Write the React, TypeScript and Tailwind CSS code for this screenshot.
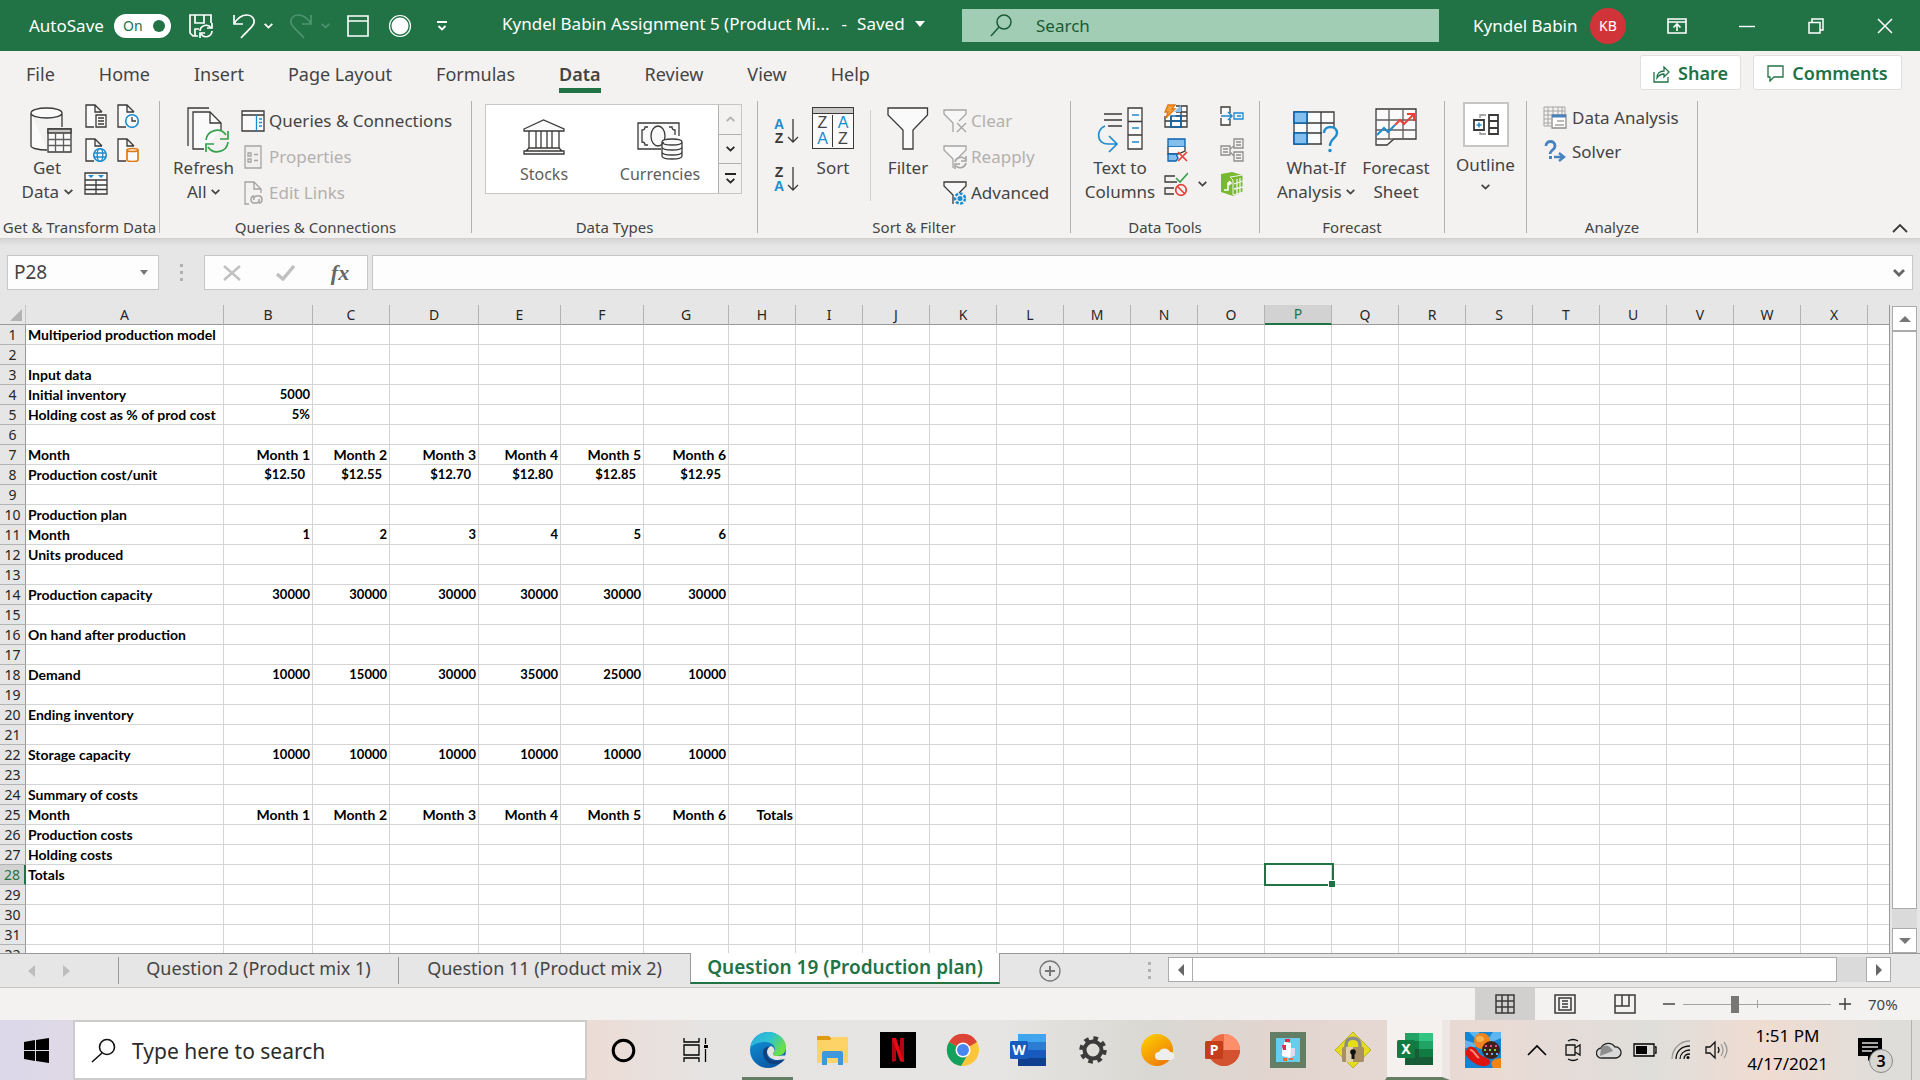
import React from "react";

type IconProps = {
  w?: number;
  h?: number;
  className?: string;
  children: React.ReactNode;
};

const Icon = ({ w = 24, h = 24, className = "", children }: IconProps) => (
  <svg
    width={w}
    height={h}
    viewBox={`0 0 ${w} ${h}`}
    fill="none"
    stroke="#3b3a39"
    strokeWidth="1.3"
    className={`shrink-0 ${className}`}
    aria-hidden="true"
  >
    {children}
  </svg>
);

const Caret = ({ className = "" }: { className?: string }) => (
  <svg
    width="9"
    height="6"
    viewBox="0 0 9 6"
    fill="none"
    stroke="currentColor"
    strokeWidth="1.8"
    className={`inline-block shrink-0 ${className}`}
    aria-hidden="true"
  >
    <path d="M0.7 0.8 4.5 4.6 8.3 0.8" />
  </svg>
);

const columns = [
  { name: "A", width: 198 },
  { name: "B", width: 89 },
  { name: "C", width: 77 },
  { name: "D", width: 89 },
  { name: "E", width: 82 },
  { name: "F", width: 83 },
  { name: "G", width: 85 },
  ..."HIJKLMNOPQRSTUVWX".split("").map((name) => ({ name, width: 67 })),
];

const months = ["Month 1", "Month 2", "Month 3", "Month 4", "Month 5", "Month 6"];

const cells: Record<number, string[]> = {
  1: ["Multiperiod production model"],
  3: ["Input data"],
  4: ["Initial inventory", "5000"],
  5: ["Holding cost as % of prod cost", "5%"],
  7: ["Month", ...months],
  8: ["Production cost/unit", "$12.50", "$12.55", "$12.70", "$12.80", "$12.85", "$12.95"],
  10: ["Production plan"],
  11: ["Month", "1", "2", "3", "4", "5", "6"],
  12: ["Units produced"],
  14: ["Production capacity", "30000", "30000", "30000", "30000", "30000", "30000"],
  16: ["On hand after production"],
  18: ["Demand", "10000", "15000", "30000", "35000", "25000", "10000"],
  20: ["Ending inventory"],
  22: ["Storage capacity", "10000", "10000", "10000", "10000", "10000", "10000"],
  24: ["Summary of costs"],
  25: ["Month", ...months, "Totals"],
  26: ["Production costs"],
  27: ["Holding costs"],
  28: ["Totals"],
};

const tabs = [
  "File",
  "Home",
  "Insert",
  "Page Layout",
  "Formulas",
  "Data",
  "Review",
  "View",
  "Help",
];

function TitleBar() {
  return (
    <header className="flex h-[51px] shrink-0 items-center bg-[#217346] text-[17px] text-white">
      <div className="flex h-full w-[502px] shrink-0 items-center pl-[29px]">
        <label htmlFor="autosave" className="w-[85px] whitespace-nowrap">
          AutoSave
        </label>
        <button
          id="autosave"
          role="switch"
          aria-checked="true"
          className="flex h-6 w-[57px] items-center justify-between rounded-full bg-white pr-[6px] pl-[9px] text-[14px] text-[#217346]"
        >
          On
          <span className="h-3 w-3 rounded-full bg-[#217346]" />
        </button>
        <button aria-label="Save" className="ml-[17px]">
          <Icon w={26} h={26}>
            <g stroke="#fff" strokeWidth="1.7">
              <path d="M10 23H5L2 20V2h21v8M7 2v8h9V2M7 23v-7h4" />
              <path d="M12 18a6 6 0 0 1 11-3M24 10v5h-5M24 18a6 6 0 0 1-11 3M12 25v-5h5" />
            </g>
          </Icon>
        </button>
        <button aria-label="Undo" className="ml-[18px] flex items-center gap-2">
          <Icon w={24} h={26}>
            <path
              d="M2 2v9h9M2 11C6 4 11 2 15 2c5 0 8 4 7 8-1 4-8 9-13 15"
              stroke="#fff"
              strokeWidth="1.7"
            />
          </Icon>
          <Caret />
        </button>
        <button
          aria-label="Redo"
          disabled
          className="ml-4 flex items-center gap-2 text-[#4c9470]"
        >
          <Icon w={24} h={26}>
            <path
              d="M22 2v9h-9M22 11C18 4 13 2 9 2 4 2 1 6 2 10c1 4 8 9 13 15"
              stroke="#4c9470"
              strokeWidth="1.7"
            />
          </Icon>
          <Caret />
        </button>
        <button aria-label="Form" className="ml-4">
          <Icon w={24} h={24}>
            <path d="M2 2h20v20H2zM2 7h20" stroke="#fff" strokeWidth="1.6" />
          </Icon>
        </button>
        <button aria-label="Record" className="ml-[18px]">
          <Icon w={24} h={24}>
            <circle cx="12" cy="12" r="10.5" stroke="#fff" strokeWidth="1.2" />
            <circle cx="12" cy="12" r="8.5" fill="#fff" stroke="none" />
          </Icon>
        </button>
        <button aria-label="Customize Quick Access Toolbar" className="ml-6">
          <Icon w={12} h={12}>
            <path d="M1 2h10M2.500 6 6 9.500 9.500 6" stroke="#fff" strokeWidth="1.8" />
          </Icon>
        </button>
      </div>
      <div className="flex w-[460px] shrink-0 items-center pb-[3px] whitespace-pre">
        <span>Kyndel Babin Assignment 5 (Product Mi...</span>
        <span className="ml-3">-</span>
        <button className="ml-[10px] flex items-center gap-[10px]">
          Saved
          <Icon w={10} h={6}>
            <path d="M0 0h10L5 6z" fill="#fff" stroke="none" />
          </Icon>
        </button>
      </div>
      <label className="flex h-[33px] min-w-0 flex-1 items-center bg-[#a0cdb4] pl-7">
        <Icon w={22} h={24}>
          <g stroke="#185c37" strokeWidth="1.5">
            <circle cx="14" cy="8" r="7" />
            <path d="M9 13 1 22" />
          </g>
        </Icon>
        <input
          type="search"
          aria-label="Search"
          placeholder="Search"
          className="ml-6 min-w-0 flex-1 bg-transparent text-[17px] outline-none placeholder:text-[#185c37]"
        />
      </label>
      <div className="flex w-[481px] shrink-0 items-center pl-[34px]">
        <button className="flex w-[153px] items-center justify-between whitespace-nowrap">
          Kyndel Babin
          <span className="flex h-9 w-9 items-center justify-center rounded-full bg-[#d13438] text-[14px]">
            KB
          </span>
        </button>
        <button aria-label="Ribbon Display Options" className="ml-[41px]">
          <Icon w={20} h={16}>
            <path
              d="M1 1h18v14H1zM1 4h18M10 13V6M6.500 9.500 10 6l3.500 3.500"
              stroke="#fff"
              strokeWidth="1.6"
            />
          </Icon>
        </button>
        <button aria-label="Minimize" className="ml-[52px]">
          <Icon w={16} h={16}>
            <path d="M0 8.500h16" stroke="#fff" strokeWidth="1.400" />
          </Icon>
        </button>
        <button aria-label="Restore" className="ml-[53px]">
          <Icon w={16} h={16}>
            <path d="M1 4.500h11V15H1zM4 4V1h11v11h-3" stroke="#fff" strokeWidth="1.500" />
          </Icon>
        </button>
        <button aria-label="Close" className="ml-[53px]">
          <Icon w={16} h={16}>
            <path d="M1 1l14 14M15 1 1 15" stroke="#fff" strokeWidth="1.500" />
          </Icon>
        </button>
      </div>
    </header>
  );
}

function TabRow() {
  return (
    <div className="flex h-12 shrink-0 items-start pl-[26px]">
      <nav className="flex gap-11 text-[18px] leading-7 text-[#444]">
        {tabs.map((tab) => (
          <button
            key={tab}
            className={
              tab === "Data"
                ? "h-[42px] border-b-[5px] border-[#217346] pt-[9px] font-semibold whitespace-nowrap"
                : "h-[42px] border-b-[5px] border-transparent pt-[9px] whitespace-nowrap"
            }
          >
            {tab}
          </button>
        ))}
      </nav>
      <div className="mt-1 mr-[18px] ml-auto flex gap-3 text-[18px] font-semibold text-[#217346]">
        <button className="flex h-[35px] w-[101px] items-center justify-center gap-2 rounded-[3px] border border-[#e1dfdd] bg-white pt-[2px]">
          <Icon w={17} h={18}>
            <path
              d="M1 7v10h14v-5M4 13c0-5 3-7 7-7V2l5 5-5 5V9c-3 0-5 1-7 4z"
              stroke="#217346"
              strokeWidth="1.300"
            />
          </Icon>
          Share
        </button>
        <button className="flex h-[35px] w-[149px] items-center justify-center gap-2 rounded-[3px] border border-[#e1dfdd] bg-white pt-[2px]">
          <Icon w={17} h={17}>
            <path d="M1 1h15v11H7l-4 4v-4H1z" stroke="#217346" strokeWidth="1.300" />
          </Icon>
          Comments
        </button>
      </div>
    </div>
  );
}

type GroupProps = { label?: string; className: string; children: React.ReactNode };

const Group = ({ label, className, children }: GroupProps) => (
  <section className={`flex shrink-0 ${className}`}>
    <div className="flex min-w-0 flex-1 flex-col">
      <div className="flex h-[118px] items-start">{children}</div>
      <div className="text-center text-[15px] leading-[22px] whitespace-nowrap">{label}</div>
    </div>
    <div className="mt-[2px] h-[132px] w-px bg-[#b3b0ad]" />
  </section>
);

type BigButtonProps = { className: string; icon: React.ReactNode; children: React.ReactNode };

const BigButton = ({ className, icon, children }: BigButtonProps) => (
  <button className={`flex shrink-0 flex-col items-center pt-2 whitespace-nowrap ${className}`}>
    <span className="flex h-[46px] items-start">{icon}</span>
    <span className="mt-[3px] leading-6">{children}</span>
  </button>
);

type RowButtonProps = { icon: React.ReactNode; disabled?: boolean; children: React.ReactNode };

const RowButton = ({ icon, disabled, children }: RowButtonProps) => (
  <button
    disabled={disabled}
    className="flex h-9 items-center gap-1 whitespace-nowrap disabled:text-[#b3b0ad]"
  >
    {icon}
    {children}
  </button>
);

const SmallButton = ({ label, children }: { label: string; children: React.ReactNode }) => (
  <button aria-label={label} className="flex h-[34px] w-8 items-center justify-center">
    {children}
  </button>
);

const Sheet = () => <path d="M10 23H2V1h9l7 7M11 1v7h7" fill="#fafafa" />;

// funnel used by the three filter rows
const Funnel = ({ color }: { color: string }) => (
  <path d="M10 23v-9L1 5V1h22v4l-7 7" stroke={color} fill="#f7f7f7" />
);

const SortLetters = ({ top, bottom, flip }: { top: string; bottom: string; flip?: boolean }) => (
  <span className="flex h-12 w-6 items-center gap-[3px]">
    <span className="flex w-[11px] flex-col text-center font-['Liberation_Sans',sans-serif] text-[14px] leading-[14px] font-bold">
      <span className={flip ? "text-[#3b3a39]" : "text-[#1e8bcd]"}>{top}</span>
      <span className={flip ? "text-[#1e8bcd]" : "text-[#3b3a39]"}>{bottom}</span>
    </span>
    <Icon w={12} h={26}>
      <path d="M6 1v23M1 19l5 5 5-5" />
    </Icon>
  </span>
);

function Ribbon() {
  return (
    <div className="flex h-[140px] shrink-0 overflow-hidden border-b border-[#d2d0ce] text-[17px] text-[#444]">
      <Group label="Get &amp; Transform Data" className="w-[160px]">
        <BigButton
          className="ml-[14px] w-[66px]"
          icon={
            <Icon w={42} h={46} className="ml-2">
              <path
                d="M1 6v33c0 2 7 4 16 4M32 6v14M1 6c0-3 7-5 15.500-5S32 3 32 6s-7 5-15.500 5S1 9 1 6z"
                fill="#fafafa"
              />
              <path d="M18 22h23v23H18z" fill="#fafafa" />
              <path d="M18 22h23v4H18z" fill="#c8c6c4" />
              <path d="M18 32.500h23M18 38.500h23M25.500 26v19M33.500 26v19" stroke="#605e5c" />
            </Icon>
          }
        >
          Get
          <br />
          Data <Caret className="mb-[3px]" />
        </BigButton>
        <div className="grid grid-cols-2">
          <SmallButton label="From Text/CSV">
            <Icon>
              <Sheet />
              <path d="M12 11h10v12H12z" fill="#fafafa" />
              <path d="M14 14h6M14 17h6M14 20h6" />
            </Icon>
          </SmallButton>
          <SmallButton label="Recent Sources">
            <Icon>
              <Sheet />
              <circle cx="16" cy="17" r="6.300" fill="#fafafa" stroke="#1e8bcd" strokeWidth="1.600" />
              <path d="M16 13v4h4" />
            </Icon>
          </SmallButton>
          <SmallButton label="From Web">
            <Icon>
              <Sheet />
              <circle cx="16" cy="17" r="6.300" fill="#fafafa" stroke="#1e8bcd" strokeWidth="1.600" />
              <ellipse cx="16" cy="17" rx="2.800" ry="6.300" stroke="#1e8bcd" />
              <path d="M10 15h12M10 19h12" stroke="#1e8bcd" />
            </Icon>
          </SmallButton>
          <SmallButton label="Existing Connections">
            <Icon>
              <Sheet />
              <path
                d="M11 12v10c0 2 11 2 11 0V12M11 12c0-2 11-2 11 0s-11 2-11 0z"
                fill="#fafafa"
                stroke="#e07a10"
                strokeWidth="1.700"
              />
            </Icon>
          </SmallButton>
          <SmallButton label="From Table/Range">
            <Icon w={24} h={24}>
              <path d="M1 1h22v21H1z" fill="#fafafa" />
              <path d="M1 8h22M1 13h22M1 17.500h22M12 8v14" />
              <path d="M4 3h6l-3 3zM14 3h6l-3 3z" fill="#1e8bcd" stroke="none" />
            </Icon>
          </SmallButton>
        </div>
      </Group>

      <Group label="Queries &amp; Connections" className="w-[312px]">
        <BigButton
          className="ml-[10px] w-[67px]"
          icon={
            <Icon w={42} h={46} className="ml-2">
              <path d="M1 39V1h21" />
              <path d="M17 42H6V5h17l11 11v7" fill="#fafafa" />
              <path d="M23 5v11h11" />
              <g stroke="#36a14c" strokeWidth="1.700">
                <path d="M19 33a11 11 0 0 1 20-5M41 24v8h-8M41 35a11 11 0 0 1-20 5M19 45v-8h8" />
              </g>
            </Icon>
          }
        >
          Refresh
          <br />
          All <Caret className="mb-[3px]" />
        </BigButton>
        <div className="ml-1 flex flex-col pt-1">
          <RowButton
            icon={
              <Icon>
                <path d="M1 2h22v20H1zM1 6h22" fill="#fafafa" />
                <path d="M15.500 6v16M18 10h3M18 13.500h3M18 17h3" stroke="#1e8bcd" />
              </Icon>
            }
          >
            Queries &amp; Connections
          </RowButton>
          <RowButton
            disabled
            icon={
              <Icon>
                <g stroke="#a6a4a2">
                  <path d="M4 1h16v22H4z" fill="#f0efee" />
                  <path d="M7 8h3v3H7zM7 14h3v3H7zM13 9.500h4M13 15.500h4" />
                </g>
              </Icon>
            }
          >
            Properties
          </RowButton>
          <RowButton
            disabled
            icon={
              <Icon>
                <g stroke="#a6a4a2">
                  <path d="M8 23H4V1h9l7 7v4M13 1v7h7" />
                  <path
                    d="M13 15h-1a4 4 0 0 0 0 7h4a3 3 0 0 0 2-4M18 22h1a4 4 0 0 0 0-7h-4a3 3 0 0 0-2 4"
                    strokeWidth="1.600"
                  />
                </g>
              </Icon>
            }
          >
            Edit Links
          </RowButton>
        </div>
      </Group>

      <Group label="Data Types" className="w-[286px]">
        <div className="mt-[5px] ml-[13px] flex h-[90px] w-[257px] border border-[#c8c6c4] bg-white text-[16px] text-[#605e5c]">
          <button className="flex flex-1 flex-col items-center pt-[13px]">
            <Icon w={42} h={38}>
              <path d="M1 11 20.500 2 41 11v2H1zM1 33h40v3H1zM3 33l3-3h30l3 3" fill="#fafafa" />
              <path d="M6 13v17M13 13v17M18 13v17M24 13v17M29 13v17M36 13v17" />
            </Icon>
            <span className="mt-[6px] leading-6">Stocks</span>
          </button>
          <button className="flex flex-1 flex-col items-center pt-[17px]">
            <Icon w={46} h={38}>
              <path d="M24 27H1V1h41v13" fill="#fafafa" />
              <path d="M11 5H8c0 2-1 3-3 3v12c2 0 3 1 3 3h3M32 5h3c0 2 1 3 3 3v5" />
              <ellipse cx="21" cy="14" rx="7" ry="10" />
              <path
                d="M25 20v14c0 4 20 4 20 0V20M25 20c0-4 20-4 20 0s-20 4-20 0zM25 25c0 4 20 4 20 0M25 30c0 4 20 4 20 0"
                fill="#fafafa"
              />
            </Icon>
            <span className="mt-[2px] leading-6">Currencies</span>
          </button>
          <div className="flex w-[23px] shrink-0 flex-col border-l border-[#b3b0ad] bg-[#f3f2f1] text-[#252423]">
            <button
              aria-label="Previous row"
              disabled
              className="flex flex-1 items-center justify-center text-[#b3b0ad]"
            >
              <Caret className="rotate-180" />
            </button>
            <button
              aria-label="Next row"
              className="flex flex-1 items-center justify-center border-y border-[#b3b0ad]"
            >
              <Caret />
            </button>
            <button
              aria-label="More data types"
              className="flex flex-1 flex-col items-center justify-center gap-[3px]"
            >
              <span className="h-[2px] w-[11px] bg-[#252423]" />
              <Caret />
            </button>
          </div>
        </div>
      </Group>

      <Group label="Sort &amp; Filter" className="w-[313px]">
        <div className="ml-4 flex flex-col pt-2">
          <button aria-label="Sort A to Z">
            <SortLetters top="A" bottom="Z" />
          </button>
          <button aria-label="Sort Z to A">
            <SortLetters top="Z" bottom="A" flip />
          </button>
        </div>
        <BigButton
          className="ml-[6px] w-[58px]"
          icon={
            <span className="flex h-[42px] w-[42px] flex-col border border-[#3b3a39] bg-[#fafafa] font-['Liberation_Sans',sans-serif] text-[16px] leading-[16px]">
              <span className="h-[6px] border-b border-[#3b3a39] bg-[#c8c6c4]" />
              <span className="grid flex-1 grid-cols-2 content-center text-center">
                <span className="border-r border-[#3b3a39]">Z</span>
                <span className="text-[#1e8bcd]">A</span>
                <span className="border-r border-[#3b3a39] text-[#1e8bcd]">A</span>
                <span>Z</span>
              </span>
            </span>
          }
        >
          Sort
        </BigButton>
        <div className="mt-[11px] ml-[8px] h-[91px] w-px bg-[#d2d0ce]" />
        <BigButton
          className="ml-[6px] w-[62px]"
          icon={
            <Icon w={42} h={44}>
              <path d="M1 1h39.500v7L26 23v19H16V23L1 8z" fill="#fafafa" />
            </Icon>
          }
        >
          Filter
        </BigButton>
        <div className="ml-1 flex flex-col pt-1">
          <RowButton
            disabled
            icon={
              <Icon>
                <Funnel color="#a6a4a2" />
                <path d="M14 14l9 9M23 14l-9 9" stroke="#a6a4a2" />
              </Icon>
            }
          >
            Clear
          </RowButton>
          <RowButton
            disabled
            icon={
              <Icon>
                <Funnel color="#a6a4a2" />
                <path
                  d="M12 17a6 6 0 0 1 10-3M23 11v5h-5M23 18a6 6 0 0 1-10 3M12 24v-5h5"
                  stroke="#a6a4a2"
                  strokeWidth="1.600"
                />
              </Icon>
            }
          >
            Reapply
          </RowButton>
          <RowButton
            icon={
              <Icon>
                <Funnel color="#3b3a39" />
                <circle
                  cx="17"
                  cy="17.500"
                  r="5"
                  stroke="#1e8bcd"
                  strokeWidth="2.500"
                  strokeDasharray="3 1.500"
                  fill="#f3f2f1"
                />
                <circle cx="17" cy="17.500" r="2.500" fill="#1e8bcd" stroke="none" />
              </Icon>
            }
          >
            Advanced
          </RowButton>
        </div>
      </Group>

      <Group label="Data Tools" className="w-[189px]">
        <BigButton
          className="ml-[14px] w-[70px]"
          icon={
            <Icon w={46} h={46}>
              <path d="M7 7h18M7 13h18M11 19h14" />
              <path d="M31 1h14v41H31zM31 14.500h14M31 28h14" fill="#fafafa" />
              <path d="M35 8h7M35 21h7M35 35h7" stroke="#1e8bcd" strokeWidth="1.600" />
              <path
                d="M8 19C-1 22-1 37 11 37h8M12 29l8 8-8 8"
                stroke="#1e8bcd"
                strokeWidth="1.700"
              />
            </Icon>
          }
        >
          Text to
          <br />
          Columns
        </BigButton>
        <div className="flex w-14 flex-col pl-[5px]">
          <SmallButton label="Flash Fill">
            <Icon>
              <path d="M1 12v11h22V2H12M1 17h22M7 12v11M17 2v21M12 8h11M12 12h11" fill="#fafafa" />
              <path d="M17 1v7h-7z" fill="#83beec" stroke="none" />
              <path d="M7 12h10v11H7zM7 17h10" stroke="#0a64ad" strokeWidth="1.600" />
              <path d="M4 1h7L8 5h3L2 14l2-6H1z" fill="#f2a040" stroke="#e07a10" />
            </Icon>
          </SmallButton>
          <SmallButton label="Remove Duplicates">
            <Icon>
              <path d="M4 1h17v8H4z" fill="#83beec" stroke="#0a64ad" />
              <path d="M4 9v7h10l7-3V9" fill="#fafafa" />
              <path d="M4 16h8l2 4-2 3H4z" fill="#83beec" stroke="#0a64ad" />
              <path d="M14 14l9 9M23 14l-9 9" stroke="#e8413c" strokeWidth="1.700" />
            </Icon>
          </SmallButton>
          <div className="flex items-center">
            <SmallButton label="Data Validation">
              <Icon>
                <path d="M11 4H1v6h12M10 16H1v6h9" />
                <path d="M12 6l4 4 8-9" stroke="#36a14c" strokeWidth="1.600" />
                <circle cx="17" cy="18" r="5.300" stroke="#e8413c" strokeWidth="1.700" />
                <path d="M13 14l8 8" stroke="#e8413c" strokeWidth="1.700" />
              </Icon>
            </SmallButton>
            <Caret className="ml-[6px]" />
          </div>
        </div>
        <div className="ml-[5px] flex flex-col">
          <SmallButton label="Consolidate">
            <Icon>
              <path d="M10 9V3H1v7M1 14v7h9v-6" fill="#fafafa" />
              <path d="M1 12h11M8 8l4 4-4 4" stroke="#1e8bcd" strokeWidth="1.500" />
              <path d="M14 9h9v6h-9zM17 12h4" stroke="#1e8bcd" />
            </Icon>
          </SmallButton>
          <SmallButton label="Relationships">
            <Icon>
              <g stroke="#8f8d8b">
                <path d="M1 8h9v9H1zM14 1h9v9h-9zM14 14h9v9h-9z" />
                <path d="M3 11h5M3 14h5M16 4h5M16 7h5M16 17h5M16 20h5M10 11l4-3M10 14l4 4" />
              </g>
            </Icon>
          </SmallButton>
          <SmallButton label="Manage Data Model">
            <Icon>
              <path d="M1 2 12 0l10 3v17l-9 4-12-4z" fill="#79b930" stroke="none" />
              <path d="M10 5l13-2v17l-10 3V8z" fill="#79b930" stroke="#f3f2f1" strokeWidth="1" />
              <path d="M14 12l9-3M14 17l9-2M17 7v15M20 6v15" stroke="#f3f2f1" />
              <path d="M4 18h4v-7h3M9 9l2 2-2 2" stroke="#fff" strokeWidth="1.500" />
            </Icon>
          </SmallButton>
        </div>
      </Group>

      <Group label="Forecast" className="w-[185px]">
        <BigButton
          className="ml-4 w-20"
          icon={
            <Icon w={46} h={46}>
              <path d="M1 5h40v32H1zM1 16h40M1 26h40M14 5v32M28 5v32" fill="#fafafa" />
              <path
                d="M1 5h13v11H1zM1 26h13v11H1z"
                fill="#83beec"
                stroke="#0a64ad"
                strokeWidth="1.600"
              />
              <path d="M29 38V21h16v17z" fill="#f3f2f1" stroke="none" />
              <path
                d="M31 26c0-8 13-8 13 0 0 6-7 5-7 13"
                stroke="#1e8bcd"
                strokeWidth="2.400"
              />
              <circle cx="37" cy="43.500" r="1.700" fill="#1e8bcd" stroke="none" />
            </Icon>
          }
        >
          What-If
          <br />
          Analysis <Caret className="mb-[3px]" />
        </BigButton>
        <BigButton
          className="w-20"
          icon={
            <Icon w={42} h={42}>
              <path d="M1 2h40v30H19l-7 6H1z" fill="#fafafa" />
              <path d="M1 32h18M1 13h40M1 23h40M14 2v30M28 2v30" stroke="#605e5c" />
              <path d="M2 28l7-7 4 4 7-7" stroke="#1e8bcd" strokeWidth="2" />
              <path d="M20 18l5-5 4 4 9-9M32 7h7v7" stroke="#e8413c" strokeWidth="2" />
            </Icon>
          }
        >
          Forecast
          <br />
          Sheet
        </BigButton>
      </Group>

      <Group className="w-[82px]">
        <button className="flex w-full flex-col items-center pt-[3px]">
          <span className="flex h-[45px] w-[46px] items-center justify-center border-2 border-[#c8c6c4] bg-white">
            <Icon w={26} h={22}>
              <path d="M1 6h10v10H1zM16 1h9v19h-9zM16 7h9M16 14h9" strokeWidth="1.800" />
              <path d="M7 4V1h6M7 18v2h6" stroke="#8f8d8b" />
              <path d="M3.500 11h5M6 8.500v5" stroke="#1e8bcd" strokeWidth="1.600" />
            </Icon>
          </span>
          <span className="mt-[6px] leading-6">Outline</span>
          <Caret className="mt-[7px]" />
        </button>
      </Group>

      <Group label="Analyze" className="w-[171px]">
        <div className="ml-4 flex flex-col pt-[2px]">
          <button className="flex h-[34px] items-center gap-[5px] whitespace-nowrap">
            <Icon>
              <path
                d="M1 1h21v9M1 1v19h7M1 5h21M1 9h8M1 13h7M1 17h7M5 1v19M10 1v8M15 1v7M19 1v7"
                stroke="#a6a4a2"
                strokeWidth="1"
              />
              <path d="M9 9h14v13H9z" fill="#fff" stroke="#8f8d8b" />
              <path d="M9 10h14" stroke="#4a82bd" strokeWidth="3" />
              <path d="M14 15h7M12 19h9" stroke="#a6a4a2" />
            </Icon>
            Data Analysis
          </button>
          <button className="flex h-[34px] items-center gap-[5px] whitespace-nowrap">
            <Icon>
              <path d="M3 6c0-6 9-6 9 0 0 4-5 4-5 8" stroke="#4a82bd" strokeWidth="2.800" />
              <path d="M6 16h3v3H6z" fill="#4a82bd" stroke="none" />
              <path d="M11 17h10M16 13l5 4-5 4" stroke="#4a82bd" strokeWidth="2.400" />
            </Icon>
            Solver
          </button>
        </div>
      </Group>

      <button aria-label="Collapse the Ribbon" className="mt-auto mr-[12px] mb-[5px] ml-auto">
        <Icon w={16} h={10}>
          <path d="M1 9l7-7 7 7" strokeWidth="1.800" />
        </Icon>
      </button>
    </div>
  );
}

const Dots = () => (
  <span className="flex flex-col gap-1">
    <span className="h-[3px] w-[3px] bg-[#b3b0ad]" />
    <span className="h-[3px] w-[3px] bg-[#b3b0ad]" />
    <span className="h-[3px] w-[3px] bg-[#b3b0ad]" />
  </span>
);

function FormulaBar() {
  return (
    <div className="flex h-[66px] shrink-0 items-start bg-linear-to-b from-[#d6d6d6] to-[#e6e6e6] to-10% pt-4 pr-[7px] pl-[7px]">
      <div className="flex h-[35px] w-[152px] shrink-0 items-center border border-[#c6c6c6] bg-[#fdfdfd] pr-[10px] pl-[6px]">
        <input
          aria-label="Name Box"
          defaultValue="P28"
          className="min-w-0 flex-1 bg-transparent text-[19px] text-[#444] outline-none"
        />
        <Icon w={8} h={5}>
          <path d="M0 0h8L4 5z" fill="#777" stroke="none" />
        </Icon>
      </div>
      <div className="flex h-[35px] w-[45px] shrink-0 items-center justify-center">
        <Dots />
      </div>
      <div className="flex h-[35px] w-[164px] shrink-0 items-center border border-[#c6c6c6] bg-[#fdfdfd]">
        <button aria-label="Cancel" disabled className="flex flex-1 justify-center">
          <Icon w={18} h={16}>
            <path d="M1 1l16 14M17 1 1 15" stroke="#c0c0c0" strokeWidth="2.400" />
          </Icon>
        </button>
        <button aria-label="Enter" disabled className="flex flex-1 justify-center">
          <Icon w={20} h={16}>
            <path d="M1 9l6 5L18 1" stroke="#c0c0c0" strokeWidth="3.400" />
          </Icon>
        </button>
        <button
          aria-label="Insert Function"
          className="flex-1 font-['Liberation_Serif',serif] text-[22px] leading-6 font-bold text-[#666] italic"
        >
          fx
        </button>
      </div>
      <div className="ml-1 flex h-[35px] min-w-0 flex-1 items-center border border-[#c6c6c6] bg-[#fdfdfd] pr-[7px]">
        <input aria-label="Formula Bar" className="min-w-0 flex-1 bg-transparent outline-none" />
        <Icon w={12} h={8}>
          <path d="M1 1l5 5 5-5" stroke="#666" strokeWidth="2.800" />
        </Icon>
      </div>
    </div>
  );
}

const cellClass = (row: number, col: number) => {
  if (col === 0) {
    return "border-r border-b border-[#d4d4d4] p-0 pl-[2px] font-['Lato',sans-serif] font-bold whitespace-nowrap text-black";
  }
  if (row === 7 || row === 25) {
    return "border-r border-b border-[#d4d4d4] p-0 pr-[2px] text-right font-['Lato',sans-serif] font-bold text-black";
  }
  if (row === 8) {
    return "border-r border-b border-[#d4d4d4] p-0 pr-[7px] text-right font-['Lato',sans-serif] text-[13px] font-bold text-black";
  }
  return "relative border-r border-b border-[#d4d4d4] p-0 pr-[2px] text-right font-['Lato',sans-serif] text-[13px] font-bold text-black";
};

function Grid() {
  return (
    <div className="flex min-h-0 flex-1 bg-[#e6e6e6]">
      <div className="min-w-0 flex-1 overflow-hidden border-r border-[#999]">
        <table className="w-full table-fixed border-separate border-spacing-0 bg-white">
          <colgroup>
            <col className="w-[26px]" />
            {columns.map((c) => (
              <col key={c.name} style={{ width: c.width }} />
            ))}
            <col />
          </colgroup>
          <thead>
            <tr className="h-5 bg-[#e6e6e6] text-[14px] leading-[18px] text-[#262626]">
              <th className="border-r border-b border-[#c6c6c6] border-b-[#999] p-0" aria-label="Select all">
                <Icon w={12} h={12} className="mr-[3px] ml-auto">
                  <path d="M12 0v12H0z" fill="#b3b3b3" stroke="none" />
                </Icon>
              </th>
              {columns.map((c) => (
                <th
                  key={c.name}
                  className={
                    c.name === "P"
                      ? "border-r border-b-2 border-[#b3b3b3] border-b-[#217346] bg-[#d2d2d2] p-0 font-normal text-[#217346]"
                      : "border-r border-b border-[#b3b3b3] border-b-[#999] p-0 font-normal"
                  }
                >
                  {c.name}
                </th>
              ))}
              <th className="border-b border-[#999] p-0" />
            </tr>
          </thead>
          <tbody>
            {Array.from({ length: 32 }, (_, i) => i + 1).map((row) => (
              <tr key={row} className="h-5 text-[14px] leading-[19px]">
                <th
                  className={
                    row === 28
                      ? "border-r-2 border-b border-[#b3b3b3] border-r-[#217346] bg-[#d2d2d2] p-0 font-normal text-[#217346]"
                      : "border-r border-b border-[#b3b3b3] border-r-[#999] bg-[#e6e6e6] p-0 font-normal text-[#262626]"
                  }
                >
                  {row}
                </th>
                {columns.map((c, i) => (
                  <td key={c.name} className={cellClass(row, i)}>
                    {cells[row]?.[i]}
                    {row === 28 && c.name === "P" && (
                      <>
                        <div className="absolute -top-[2px] -right-[3px] -bottom-[2px] -left-px z-10 border-2 border-[#217346]" />
                        <div className="absolute -right-1 -bottom-[3px] z-10 h-[7px] w-[7px] border-t border-l border-white bg-[#217346]" />
                      </>
                    )}
                  </td>
                ))}
                <td className="border-b border-[#d4d4d4] p-0" />
              </tr>
            ))}
          </tbody>
        </table>
      </div>
      <div className="mt-px mr-[3px] ml-[2px] flex w-[25px] shrink-0 flex-col bg-[#dadada]">
        <button
          aria-label="Scroll up"
          className="flex h-[25px] items-center justify-center border border-[#ababab] bg-white"
        >
          <Icon w={12} h={6}>
            <path d="M0 6h12L6 0z" fill="#777" stroke="none" />
          </Icon>
        </button>
        <div className="flex-1 border border-[#ababab] bg-white" />
        <div className="h-[19px]" />
        <button
          aria-label="Scroll down"
          className="flex h-[25px] items-center justify-center border border-[#ababab] bg-white"
        >
          <Icon w={12} h={6}>
            <path d="M0 0h12L6 6z" fill="#777" stroke="none" />
          </Icon>
        </button>
      </div>
    </div>
  );
}

function SheetTabs() {
  return (
    <div className="flex h-[34px] shrink-0 border-t border-[#999] bg-[#e6e6e6] text-[18px] text-[#444]">
      <div className="flex w-[118px] shrink-0 items-center gap-7 pl-7">
        <button aria-label="Previous sheet" disabled>
          <Icon w={7} h={12}>
            <path d="M7 0v12L0 6z" fill="#bdbdbd" stroke="none" />
          </Icon>
        </button>
        <button aria-label="Next sheet" disabled>
          <Icon w={7} h={12}>
            <path d="M0 0v12l7-6z" fill="#bdbdbd" stroke="none" />
          </Icon>
        </button>
      </div>
      <button className="my-[3px] w-[280px] shrink-0 border-l border-[#999] pb-[5px] leading-[22px] whitespace-nowrap">
        Question 2 (Product mix 1)
      </button>
      <button className="my-[3px] w-[292px] shrink-0 border-l border-[#999] pb-[5px] leading-[22px] whitespace-nowrap">
        Question 11 (Product mix 2)
      </button>
      <button className="-mt-px h-[31px] w-[310px] shrink-0 border-x border-b-2 border-[#999] border-b-[#217346] bg-white text-[19px] font-semibold whitespace-nowrap text-[#217346]">
        Question 19 (Production plan)
      </button>
      <button aria-label="New sheet" className="ml-[39px]">
        <Icon w={22} h={22}>
          <circle cx="11" cy="11" r="10" stroke="#777" />
          <path d="M6 11h10M11 6v10" stroke="#777" strokeWidth="2" />
        </Icon>
      </button>
      <div className="mr-[17px] ml-auto flex items-center">
        <Dots />
      </div>
      <div className="mt-[3px] mr-[29px] flex h-[25px] w-[723px] shrink-0 bg-[#dadada]">
        <button
          aria-label="Scroll left"
          className="flex w-[25px] items-center justify-center border border-[#ababab] bg-white"
        >
          <Icon w={6} h={12}>
            <path d="M6 0v12L0 6z" fill="#666" stroke="none" />
          </Icon>
        </button>
        <div className="flex-1 border border-l-0 border-[#ababab] bg-white" />
        <div className="w-[29px]" />
        <button
          aria-label="Scroll right"
          className="flex w-[25px] items-center justify-center border border-[#ababab] bg-white"
        >
          <Icon w={6} h={12}>
            <path d="M0 0v12l6-6z" fill="#666" stroke="none" />
          </Icon>
        </button>
      </div>
    </div>
  );
}

function StatusBar() {
  return (
    <footer className="flex h-[33px] shrink-0 items-center justify-end border-t border-[#c6c6c6] bg-[#f3f2f1] text-[#444]">
      <button
        aria-label="Normal view"
        className="flex h-full w-[60px] items-center justify-center bg-[#d2d0ce]"
      >
        <Icon w={20} h={20}>
          <path d="M1 1h18v18H1zM1 7h18M1 13h18M7 1v18M13 1v18" strokeWidth="1.500" />
        </Icon>
      </button>
      <button aria-label="Page layout view" className="flex h-full w-[60px] items-center justify-center">
        <Icon w={22} h={20}>
          <path d="M1 1h20v18H1zM5 4h12v12H5z" strokeWidth="1.500" />
          <path d="M8 7h6M8 10h6M8 13h6" />
        </Icon>
      </button>
      <button
        aria-label="Page break preview"
        className="flex h-full w-[60px] items-center justify-center"
      >
        <Icon w={22} h={20}>
          <path d="M1 1h20v18H1zM1 12h14V1M8 1v11" strokeWidth="1.500" />
        </Icon>
      </button>
      <button aria-label="Zoom out" className="ml-2">
        <Icon w={12} h={12}>
          <path d="M0 6h12" strokeWidth="1.400" />
        </Icon>
      </button>
      <div className="relative ml-2 flex w-[148px] items-center">
        <span className="absolute left-[74px] h-2 w-px bg-[#a6a4a2]" />
        <input
          type="range"
          aria-label="Zoom"
          min="0"
          max="100"
          defaultValue="34"
          className="relative h-[17px] w-full appearance-none bg-transparent [&::-webkit-slider-runnable-track]:h-px [&::-webkit-slider-runnable-track]:bg-[#a6a4a2] [&::-webkit-slider-thumb]:-mt-2 [&::-webkit-slider-thumb]:h-[17px] [&::-webkit-slider-thumb]:w-2 [&::-webkit-slider-thumb]:appearance-none [&::-webkit-slider-thumb]:bg-[#797775]"
        />
      </div>
      <button aria-label="Zoom in" className="ml-2">
        <Icon w={12} h={12}>
          <path d="M0 6h12M6 0v12" strokeWidth="1.400" />
        </Icon>
      </button>
      <button className="ml-[17px] w-[52px] text-left text-[15px]">70%</button>
    </footer>
  );
}

const Tile = ({ label, children }: { label: string; children: React.ReactNode }) => (
  <button aria-label={label} className="flex h-full w-[65px] shrink-0 items-center justify-center">
    {children}
  </button>
);

const Tray = ({ label, children }: { label: string; children: React.ReactNode }) => (
  <button aria-label={label} className="flex h-full w-9 shrink-0 items-center justify-center">
    {children}
  </button>
);

function Taskbar() {
  return (
    <div className="flex h-[60px] shrink-0 bg-[linear-gradient(90deg,#dcd8ea_0%,#e8dcdc_14%,#ecdcd6_31%,#e5e4e3_37%,#e6e5e3_52%,#d9d8d3_60%,#e2d5cf_66%,#e9dad4_78%,#dfdedb_86%,#f0dcd1_92%,#dfddda_98%)] text-black">
      <button aria-label="Start" className="flex w-[73px] shrink-0 items-center justify-center">
        <Icon w={25} h={25}>
          <path d="M0 4l11-2v10H0zM12 2l13-2v12H12zM0 13h11v10L0 21zM12 13h13v12l-13-2z" fill="#000" stroke="none" />
        </Icon>
      </button>
      <label className="flex w-[514px] shrink-0 items-center border-2 border-[#ccc] bg-white pl-4">
        <Icon w={25} h={25}>
          <g stroke="#111" strokeWidth="1.600">
            <circle cx="16" cy="9" r="7.500" />
            <path d="M11 15 1 24" />
          </g>
        </Icon>
        <input
          aria-label="Type here to search"
          placeholder="Type here to search"
          className="ml-4 min-w-0 flex-1 bg-transparent pt-1 text-[21px] outline-none placeholder:text-[#2b2b2b]"
        />
      </label>
      <button aria-label="Cortana" className="flex w-[72px] shrink-0 items-center justify-center">
        <Icon w={25} h={25}>
          <circle cx="12.500" cy="12.500" r="10.300" stroke="#000" strokeWidth="3" />
        </Icon>
      </button>
      <button aria-label="Task View" className="flex w-[72px] shrink-0 items-center justify-center">
        <Icon w={25} h={24}>
          <path d="M1 0v4h15V0M1 24v-4h15v4M1 7h15v10H1zM22.500 0v6M22.500 11v13" stroke="#000" />
          <path d="M21 7h4v3h-4z" fill="#000" stroke="none" />
        </Icon>
      </button>
      <div className="ml-1 flex">
        <button
          aria-label="Microsoft Edge"
          className="relative flex w-[65px] items-center justify-center"
        >
          <Icon w={38} h={38}>
            <defs>
              <linearGradient id="edgeTop" x1="0" y1="0" x2="1" y2="0.500">
                <stop offset="0" stopColor="#2aa9e0" />
                <stop offset="0.550" stopColor="#2fc3d0" />
                <stop offset="1" stopColor="#6be048" />
              </linearGradient>
              <linearGradient id="edgeBody" x1="0" y1="0" x2="0.500" y2="1">
                <stop offset="0" stopColor="#0f9be0" />
                <stop offset="1" stopColor="#0c59a4" />
              </linearGradient>
            </defs>
            <g stroke="none">
              <circle cx="19" cy="19" r="18" fill="url(#edgeBody)" />
              <path
                d="M1 17C3 7 10 1 19 1c10 0 18 7 18 15 0 6-4 9-9 9-4 0-5-2-3-4 3-5-2-10-9-10C9 11 3 14 1 17z"
                fill="url(#edgeTop)"
              />
              <path d="M14 21c0 8 6 13 13 12 4 0 7-2 9-5-6 3-16 3-18-4-1-3 1-6 4-8-5-1-8 2-8 5z" fill="#123f7e" />
              <path d="M22 15c-4 2-5 6-3 9 3 6 12 6 18 3 0-4-2-2-9-2-4 0-5-2-3-4 1-2 0-5-3-6z" fill="#e5e4e3" />
            </g>
          </Icon>
          <span className="absolute bottom-0 h-[3px] w-[51px] bg-[#647d65]" />
        </button>
        <Tile label="File Explorer">
          <Icon w={34} h={30}>
            <g stroke="none">
              <path d="M1 1h12l3 3-3 4H1z" fill="#dd9a12" />
              <path d="M1 5h13l3-3h15v26H1z" fill="#fdd267" />
              <path d="M6 30V18q0-2 2-2h17q2 0 2 2v12h-5v-7H11v7z" fill="#3f97dc" />
            </g>
          </Icon>
        </Tile>
        <Tile label="Netflix">
          <Icon w={36} h={36}>
            <path d="M0 0h36v36H0z" fill="#000" stroke="none" />
            <path d="M12 6h4v23l-4 1zM20 6h4v24l-4-1z" fill="#b1060f" stroke="none" />
            <path d="M12 6h4l8 24-4-1z" fill="#e50914" stroke="none" />
          </Icon>
        </Tile>
        <Tile label="Google Chrome">
          <Icon w={34} h={34}>
            <g stroke="none">
              <circle cx="17" cy="17" r="16" fill="#fbc63c" />
              <path d="M17 17 3 9a16 16 0 0 1 28 0z" fill="#dc4437" />
              <path d="M3 9a16 16 0 0 0 12 24l7-12-5-4z" fill="#14a05d" />
              <circle cx="17" cy="17" r="7.500" fill="#fff" />
              <circle cx="17" cy="17" r="6" fill="#4886f0" />
            </g>
          </Icon>
        </Tile>
        <Tile label="Word">
          <Icon w={36} h={34}>
            <g stroke="none">
              <path d="M8 1h28v8H8z" fill="#41a5ee" />
              <path d="M8 9h28v8H8z" fill="#2b7cd3" />
              <path d="M8 17h28v8H8z" fill="#185abd" />
              <path d="M8 25h28v8H8z" fill="#103f91" />
              <rect y="8" width="18" height="18" rx="1.500" fill="#185abd" />
            </g>
            <text x="9" y="22" textAnchor="middle" fontSize="14" fontWeight="700" fill="#fff" stroke="none">
              W
            </text>
          </Icon>
        </Tile>
        <Tile label="Settings">
          <Icon w={28} h={28}>
            <circle cx="14" cy="14" r="8.500" stroke="#3b3b3b" strokeWidth="4" />
            <circle cx="14" cy="14" r="11.700" stroke="#3b3b3b" strokeWidth="4" strokeDasharray="4.600 4.590" />
          </Icon>
        </Tile>
        <Tile label="Weather">
          <Icon w={34} h={34}>
            <defs>
              <linearGradient id="sun" x1="0" y1="0" x2="0.700" y2="1">
                <stop offset="0" stopColor="#ffd400" />
                <stop offset="1" stopColor="#ee7a08" />
              </linearGradient>
            </defs>
            <circle cx="16" cy="17" r="16" fill="url(#sun)" stroke="none" />
            <path
              d="M18 27a4 4 0 0 1 0-8 6 6 0 0 1 11 0 4 4 0 0 1 1 8z"
              fill="#eee"
              stroke="none"
            />
          </Icon>
        </Tile>
        <Tile label="PowerPoint">
          <Icon w={36} h={34}>
            <g stroke="none">
              <circle cx="19" cy="17" r="16" fill="#ed6c47" />
              <path d="M19 1a16 16 0 0 1 16 16H19z" fill="#ff8f6b" />
              <path d="M35 17a16 16 0 0 1-32 0z" fill="#d35230" />
              <rect y="8" width="18" height="18" rx="1.500" fill="#c43e1c" />
            </g>
            <text x="9" y="22" textAnchor="middle" fontSize="14" fontWeight="700" fill="#fff" stroke="none">
              P
            </text>
          </Icon>
        </Tile>
        <Tile label="Crossy Road">
          <Icon w={36} h={36}>
            <g stroke="none">
              <path d="M0 0h36v36H0z" fill="#647d65" />
              <path d="M6 6h24v24H6z" fill="#66cdec" />
              <path d="M14 10l7 1v5h4v7l-5 3-8-2v-7l2-2z" fill="#fff" />
              <path d="M21 16h4v7l-5 3z" fill="#e3d9ea" />
              <path d="M15 7h5v3h-5zM12 13h4v5h-3z" fill="#e52847" />
              <path d="M13 26h4v3h-4zM19 26h4v2h-4z" fill="#ee6e36" />
            </g>
          </Icon>
        </Tile>
        <Tile label="LockDown Browser">
          <Icon w={36} h={36}>
            <path d="M18 0l18 18-18 18L0 18z" fill="#e6dc1e" stroke="#b9b22a" strokeWidth="1" />
            <path d="M11 18v-5c0-9 14-9 14 0v5" stroke="#8b8b8b" strokeWidth="3.500" />
            <rect x="7" y="15" width="22" height="15" rx="1.500" fill="#a98f66" stroke="none" />
            <path d="M11 15h7v15h-7z" fill="#e0cfac" stroke="none" />
            <circle cx="18" cy="20" r="2.800" fill="#111" stroke="none" />
            <path d="M16.500 20h3v7h-3z" fill="#111" stroke="none" />
          </Icon>
        </Tile>
        <button
          aria-label="Excel"
          className="flex w-[65px] items-center justify-center border-x-2 border-r-8 border-b-[3px] border-x-transparent border-r-[#eee6e2] border-b-[#647d65] bg-[#f5f1ef] bg-clip-padding"
        >
          <Icon w={36} h={34}>
            <g stroke="none">
              <path d="M8 1h14v8H8z" fill="#21a366" />
              <path d="M22 1h14v8H22z" fill="#33c481" />
              <path d="M8 9h14v8H8z" fill="#107c41" />
              <path d="M22 9h14v8H22z" fill="#21a366" />
              <path d="M8 17h14v8H8z" fill="#185c37" />
              <path d="M22 17h14v8H22z" fill="#107c41" />
              <path d="M8 25h28v8H8z" fill="#185c37" />
              <rect y="8" width="18" height="18" rx="1.500" fill="#107c41" />
            </g>
            <text x="9" y="22" textAnchor="middle" fontSize="14" fontWeight="700" fill="#fff" stroke="none">
              X
            </text>
          </Icon>
        </button>
        <Tile label="Candy Crush Saga">
          <Icon w={36} h={36}>
            <g stroke="none">
              <path d="M0 0h36v36H0z" fill="#1583d3" />
              <path d="M4 0h10l4 14zM0 8v8l18-2zM28 0h8v6l-18 8z" fill="#5db6ee" />
              <ellipse cx="17" cy="9" rx="8" ry="8" fill="#f28318" />
              <ellipse cx="15" cy="7" rx="4" ry="3" fill="#f9b252" />
              <circle cx="26" cy="18" r="9" fill="#3d2019" />
              <path d="M2 17c3-5 8-2 11 3 4 6 10 5 12 9 1 5-7 7-14 3C4 28-2 23 2 17z" fill="#e0140f" />
              <path d="M28 36q-4-6 2-9l6-1v10z" fill="#f28318" />
            </g>
            <path d="M5 18c3-1 5 5 9 8" stroke="#ff8b78" strokeWidth="2" />
            <g strokeWidth="2" strokeDasharray="2 3">
              <path d="M20 14h12" stroke="#f24b8b" />
              <path d="M19 18h14" stroke="#6fd34b" />
              <path d="M21 22h12" stroke="#5ab8f2" />
            </g>
          </Icon>
        </Tile>
      </div>
      <div className="ml-auto flex">
        <Tray label="Show hidden icons">
          <Icon w={20} h={12}>
            <path d="M1 11l9-9 9 9" stroke="#000" strokeWidth="1.600" />
          </Icon>
        </Tray>
        <Tray label="Meet Now">
          <Icon w={18} h={24}>
            <path d="M2 7h9v10H2zM11 10l5-3v10l-5-3M4 3q5-3 10 0M4 21q5 3 10 0" stroke="#111" />
          </Icon>
        </Tray>
        <Tray label="OneDrive">
          <Icon w={26} h={18}>
            <path
              d="M6 17a5 5 0 0 1-1-10 8 8 0 0 1 14-1 5 5 0 0 1 1 11z"
              fill="#d9d9d9"
              stroke="#222"
            />
            <path d="M5 7q6-6 12 3L4 15z" fill="#8d8d8d" stroke="none" />
          </Icon>
        </Tray>
        <Tray label="Battery">
          <Icon w={24} h={14}>
            <path d="M1 1h20v12H1zM22 4h1v6h-1" stroke="#000" />
            <path d="M3 3h11v8H3z" fill="#000" stroke="none" />
          </Icon>
        </Tray>
        <Tray label="Network">
          <Icon w={20} h={20}>
            <path d="M1 19C1 9 9 1 19 1" stroke="#999" />
            <path d="M5 19c0-8 6-13 14-13M9 19c0-5 4-9 10-9M13 19c0-3 2-5 6-5" stroke="#111" />
            <circle cx="17" cy="17.500" r="1.500" fill="#000" stroke="none" />
          </Icon>
        </Tray>
        <Tray label="Volume">
          <Icon w={24} h={20}>
            <path d="M1 7h4l5-5v16l-5-5H1z" stroke="#111" />
            <path d="M13 7q2 3 0 6" stroke="#111" />
            <path d="M16 4q4 6 0 12M19 2q6 8 0 16" stroke="#999" />
          </Icon>
        </Tray>
        <button className="flex w-[105px] shrink-0 flex-col items-center pt-[2px] text-[17px] leading-7">
          <span>1:51 PM</span>
          <span>4/17/2021</span>
        </button>
        <button
          aria-label="Notifications"
          className="relative flex w-[72px] shrink-0 items-center justify-center border-r border-[#b5b3b0] pr-3"
        >
          <Icon w={24} h={24}>
            <path d="M0 0h24v18h-9l-5 5v-5H0z" fill="#000" stroke="none" />
            <path d="M4 5h16M4 9h16M4 13h10" stroke="#ddd" strokeWidth="1.500" />
          </Icon>
          <span className="absolute top-[29px] left-[29px] flex h-6 w-6 items-center justify-center rounded-full border border-[#888] bg-[#d9d7d4] text-[16px] font-semibold">
            3
          </span>
        </button>
        <button aria-label="Show desktop" className="w-2 shrink-0" />
      </div>
    </div>
  );
}

export default function App() {
  return (
    <div className="flex h-screen w-full flex-col overflow-hidden bg-[#f3f2f1] font-['Noto_Sans',sans-serif]">
      <TitleBar />
      <TabRow />
      <Ribbon />
      <FormulaBar />
      <Grid />
      <SheetTabs />
      <StatusBar />
      <Taskbar />
    </div>
  );
}
